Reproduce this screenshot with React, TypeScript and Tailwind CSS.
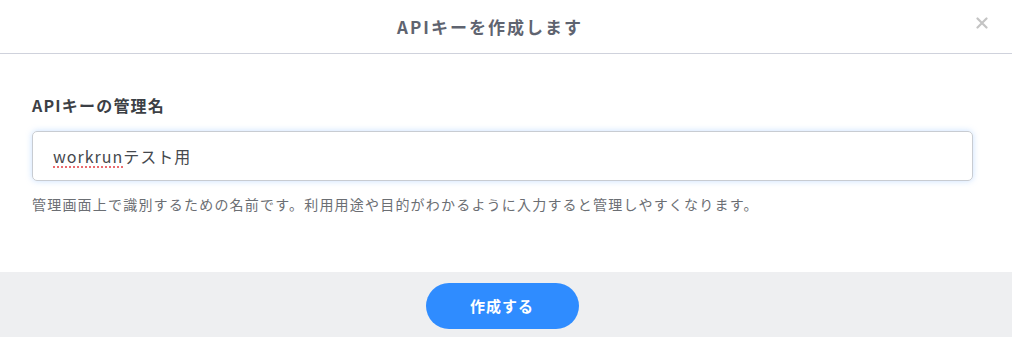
const font = { fontFamily: '"Noto Sans CJK JP", "Noto Sans", sans-serif' };

export default function App() {
  return (
    <div className="w-[1012px] h-[337px] bg-white flex flex-col" style={font}>
      {/* header */}
      <div className="relative h-[54px] flex items-center justify-center pr-[32px] border-b border-[#cfd2dc]">
        <h1 className="text-[17px] font-bold text-[#5f6470] tracking-[2px]">APIキーを作成します</h1>
        <button className="absolute right-[22px] top-[15px] w-[16px] h-[16px] flex items-center justify-center text-[#c4c4c4]">
          <svg width="12" height="12" viewBox="0 0 12 12">
            <path d="M1.5 1.5 L10.5 10.5 M10.5 1.5 L1.5 10.5" stroke="currentColor" strokeWidth="2.2" strokeLinecap="round" />
          </svg>
        </button>
      </div>

      {/* body */}
      <div className="flex-1 px-[32px] pt-[40px]">
        <label className="block text-[16px] font-bold text-[#3c3f45] leading-[22px] tracking-[1.2px] mb-[15px]">
          APIキーの管理名
        </label>
        <div className="w-[941px] h-[50px] rounded-[5px] border border-[#c8ccd2] px-[20px] flex items-center text-[16px] text-[#45484d] tracking-[1px] shadow-[0_0_6px_rgba(120,180,255,0.4)]">
          <span className="underline decoration-dotted decoration-[#e5484d] underline-offset-[4px]">workrun</span>
          <span>テスト用</span>
        </div>
        <p className="mt-[13px] text-[14px] text-[#6b6e73] leading-[20px] tracking-[1.2px]">
          管理画面上で識別するための名前です。利用用途や目的がわかるように入力すると管理しやすくなります。
        </p>
      </div>

      {/* footer */}
      <div className="h-[65px] bg-[#eeeff1] flex items-center justify-center">
        <button className="w-[153px] h-[46px] mr-[8px] mt-[3px] rounded-full bg-[#2f8cff] text-white text-[15px] font-bold tracking-[1px]">
          作成する
        </button>
      </div>
    </div>
  );
}
